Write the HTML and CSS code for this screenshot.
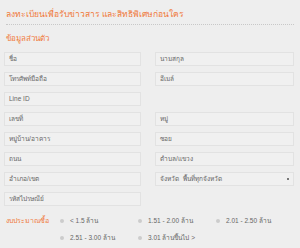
FILE: index.html
```html
<!DOCTYPE html>
<html lang="th">
<head>
    <meta charset="UTF-8">
    <title>ลงทะเบียน</title>
    <link rel="stylesheet" href="styles.css">
</head>
<body>
<div class="register">
    <div class="register-title">ลงทะเบียนเพื่อรับข่าวสาร และสิทธิพิเศษก่อนใคร</div>
    <div class="section-title">ข้อมูลส่วนตัว</div>
    <div class="form-grid">
        <div class="field">ชื่อ</div>
        <div class="field">นามสกุล</div>
        <div class="field">โทรศัพท์มือถือ</div>
        <div class="field">อีเมล์</div>
        <div class="field">Line ID</div>
        <div class="field-empty"></div>
        <div class="field">เลขที่</div>
        <div class="field">หมู่</div>
        <div class="field">หมู่บ้าน/อาคาร</div>
        <div class="field">ซอย</div>
        <div class="field">ถนน</div>
        <div class="field">ตำบล/แขวง</div>
        <div class="field">อำเภอ/เขต</div>
        <div class="field field-select">จังหวัด&nbsp;&nbsp;พื้นที่ทุกจังหวัด<span class="select-arrow"></span></div>
        <div class="field">รหัสไปรษณีย์</div>
    </div>
    <div class="budget">
        <div class="budget-label">งบประมาณซื้อ</div>
        <div class="budget-options">
            <label class="option"><span class="dot"></span>&lt; 1.5 ล้าน</label>
            <label class="option"><span class="dot"></span>1.51 - 2.00 ล้าน</label>
            <label class="option"><span class="dot"></span>2.01 - 2.50 ล้าน</label>
            <label class="option"><span class="dot"></span>2.51 - 3.00 ล้าน</label>
            <label class="option"><span class="dot"></span>3.01 ล้านขึ้นไป &gt;</label>
        </div>
    </div>
</div>
</body>
</html>
```

FILE: styles.css
```css
body {
    margin: 0;
    background: #eeeeee;
    font-family: "Liberation Sans", "Noto Sans", sans-serif;
    color: #666666;
}

.register {
    padding: 8px 6px 0 4px;
}

.register-title {
    margin-left: 2px;
    font-size: 8.5px;
    line-height: 12px;
    color: #f07a3c;
    padding-bottom: 4px;
    border-bottom: 1px dotted #c8c8c8;
}

.section-title {
    margin: 8px 0 0 2px;
    font-size: 8px;
    line-height: 12px;
    color: #f07a3c;
}

.form-grid {
    display: grid;
    grid-template-columns: 137px 139px;
    column-gap: 14px;
    row-gap: 6px;
    margin-top: 7px;
}

.field {
    position: relative;
    height: 12px;
    border: 1px solid #e2e2e2;
    background: #f0f0f0;
    font-size: 6.5px;
    line-height: 12px;
    padding-left: 4px;
    color: #666666;
}

.field-empty {
    height: 14px;
}

.select-arrow {
    position: absolute;
    right: 4px;
    top: 5px;
    width: 2px;
    height: 2px;
    background: #777777;
}

.budget {
    display: flex;
    margin-top: 9px;
    margin-left: 2px;
}

.budget-label {
    width: 54px;
    flex-shrink: 0;
    font-size: 7px;
    line-height: 12px;
    color: #f07a3c;
}

.budget-options {
    display: flex;
    flex-wrap: wrap;
    flex: 1;
    row-gap: 5px;
}

.option {
    display: flex;
    align-items: center;
    width: 78px;
    height: 12px;
    font-size: 6.5px;
    color: #666666;
}

.dot {
    width: 4px;
    height: 4px;
    border-radius: 50%;
    background: #cccccc;
    margin-right: 6px;
}
```
